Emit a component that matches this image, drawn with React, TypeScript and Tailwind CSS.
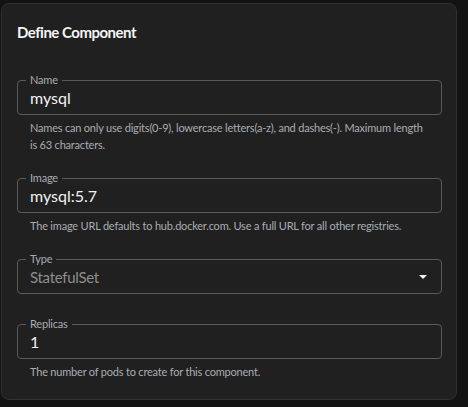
import React from "react";

interface FieldProps {
  label: string;
  value: string;
  helper?: string;
  disabled?: boolean;
  select?: boolean;
  className?: string;
}

function Field({ label, value, helper, disabled, select, className }: FieldProps) {
  return (
    <div className={className}>
      <div className="relative flex h-[35px] w-[425px] items-center rounded-[4px] border border-[#5a5a5a] pl-[12px] pr-[12px]">
        <span className="absolute -top-[9px] left-[8px] bg-[#202020] px-[4px] text-[11px] leading-[16px] tracking-[-0.2px] text-[#a9adb3]">
          {label}
        </span>
        <span
          className={
            disabled
              ? "flex-1 text-[15px] leading-[20px] tracking-[-0.3px] text-[#8e8e8e]"
              : "flex-1 text-[16px] leading-[20px] text-[#f2f2f2]"
          }
        >
          {value}
        </span>
        {select && (
          <svg width="10" height="6" viewBox="0 0 10 6" className="mr-[1px]">
            <path d="M1 1 L9 1 L5 5 Z" fill="#f0f0f0" />
          </svg>
        )}
      </div>
      {helper && (
        <p className="mt-[4px] w-[425px] pl-[13px] pr-[14px] text-[11px] leading-[17px] tracking-[-0.2px] text-[#a9adb3]">
          {helper}
        </p>
      )}
    </div>
  );
}

export default function App() {
  return (
    <div
      className="h-[407px] w-[468px] overflow-hidden bg-[#131313] pl-[1px] pt-[3px]"
      style={{ fontFamily: "Lato, 'Open Sans', sans-serif" }}
    >
      <div className="h-[397px] w-[456px] rounded-[8px] border border-[#303030] bg-[#202020] pl-[15px] pt-[18px]">
        <h2 className="text-[15px] font-bold leading-[20px] tracking-[-0.5px] text-[#f5f5f5]">Define Component</h2>
        <Field
          className="mt-[38px]"
          label="Name"
          value="mysql"
          helper="Names can only use digits(0-9), lowercase letters(a-z), and dashes(-). Maximum length is 63 characters."
        />
        <Field
          className="mt-[25px]"
          label="Image"
          value="mysql:5.7"
          helper="The image URL defaults to hub.docker.com. Use a full URL for all other registries."
        />
        <Field className="mt-[25px]" label="Type" value="StatefulSet" disabled select />
        <Field
          className="mt-[30px]"
          label="Replicas"
          value="1"
          helper="The number of pods to create for this component."
        />
      </div>
    </div>
  );
}
